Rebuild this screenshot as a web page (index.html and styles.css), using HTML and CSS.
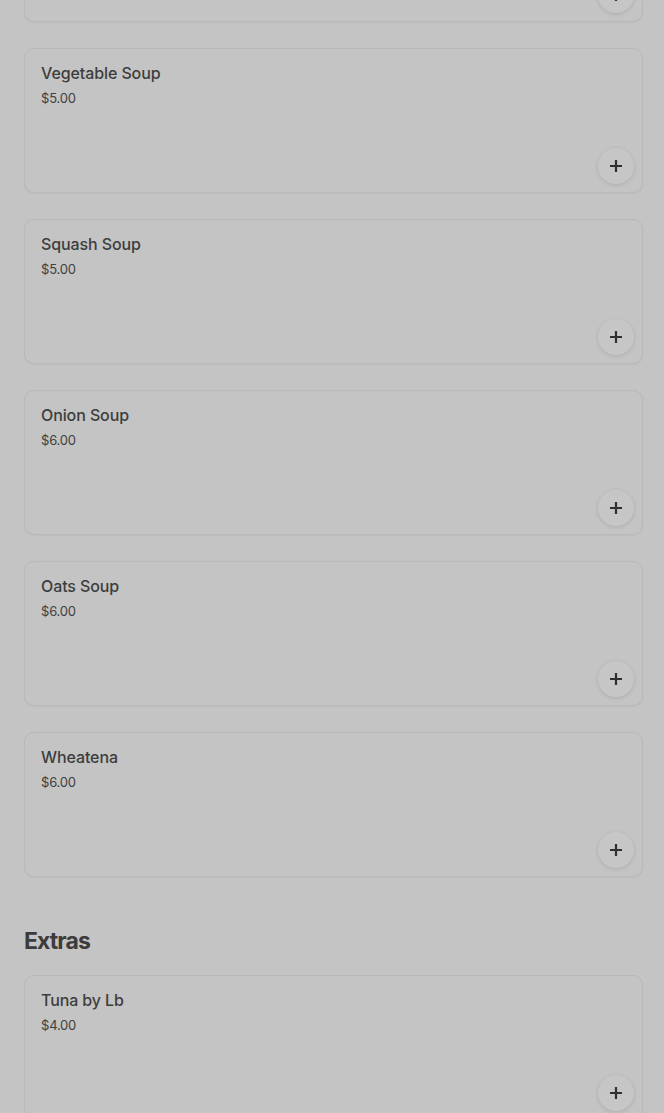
FILE: index.html
```html
<!DOCTYPE html>
<html lang="en">

<head>
    <meta charset="UTF-8">
    <meta name="viewport" content="width=device-width, initial-scale=1.0">
    <title>Menu</title>
    <link rel="stylesheet" href="styles.css">
</head>

<body>

    <div class="menu">
        <section class="category">
            <div class="item">
                <h3>Chicken Soup</h3>
                <p>$5.00</p>
                <button class="add" aria-label="Add">
                    <svg viewBox="0 0 14 14" width="14" height="14"><path d="M7 1v12M1 7h12" stroke="currentColor" stroke-width="2.2" fill="none"/></svg>
                </button>
            </div>
            <div class="item">
                <h3>Vegetable Soup</h3>
                <p>$5.00</p>
                <button class="add" aria-label="Add">
                    <svg viewBox="0 0 14 14" width="14" height="14"><path d="M7 1v12M1 7h12" stroke="currentColor" stroke-width="2.2" fill="none"/></svg>
                </button>
            </div>
            <div class="item">
                <h3>Squash Soup</h3>
                <p>$5.00</p>
                <button class="add" aria-label="Add">
                    <svg viewBox="0 0 14 14" width="14" height="14"><path d="M7 1v12M1 7h12" stroke="currentColor" stroke-width="2.2" fill="none"/></svg>
                </button>
            </div>
            <div class="item">
                <h3>Onion Soup</h3>
                <p>$6.00</p>
                <button class="add" aria-label="Add">
                    <svg viewBox="0 0 14 14" width="14" height="14"><path d="M7 1v12M1 7h12" stroke="currentColor" stroke-width="2.2" fill="none"/></svg>
                </button>
            </div>
            <div class="item">
                <h3>Oats Soup</h3>
                <p>$6.00</p>
                <button class="add" aria-label="Add">
                    <svg viewBox="0 0 14 14" width="14" height="14"><path d="M7 1v12M1 7h12" stroke="currentColor" stroke-width="2.2" fill="none"/></svg>
                </button>
            </div>
            <div class="item">
                <h3>Wheatena</h3>
                <p>$6.00</p>
                <button class="add" aria-label="Add">
                    <svg viewBox="0 0 14 14" width="14" height="14"><path d="M7 1v12M1 7h12" stroke="currentColor" stroke-width="2.2" fill="none"/></svg>
                </button>
            </div>
        </section>

        <section class="category">
            <h2>Extras</h2>
            <div class="item">
                <h3>Tuna by Lb</h3>
                <p>$4.00</p>
                <button class="add" aria-label="Add">
                    <svg viewBox="0 0 14 14" width="14" height="14"><path d="M7 1v12M1 7h12" stroke="currentColor" stroke-width="2.2" fill="none"/></svg>
                </button>
            </div>
        </section>
    </div>

</body>

</html>
```

FILE: styles.css
```css
body {
    font-family: Inter, "Noto Sans", sans-serif;
    background-color: #c4c4c4;
    margin: 0;
    padding: 0;
    overflow: hidden;
}

.menu {
    width: 619px;
    margin: -123px 0 0 24px;
}

.category {
    display: flex;
    flex-direction: column;
    gap: 26px;
}

.category h2 {
    margin: 49px 0 -7px;
    font-size: 23px;
    font-weight: 700;
    line-height: 30px;
    letter-spacing: -0.9px;
    color: #3c3c3c;
}

/* Menu items */
.item {
    box-sizing: border-box;
    height: 145px;
    display: flex;
    flex-direction: column;
    padding: 13px 8px 8px 16px;
    border: 1px solid #b9b9b9;
    border-radius: 10px;
    background-color: #c4c4c4;
    box-shadow: 0 1px 2px rgba(0, 0, 0, 0.04);
}

.item h3 {
    margin: 0;
    font-size: 16px;
    font-weight: 500;
    line-height: 22px;
    letter-spacing: -0.1px;
    color: #3d3d3d;
}

.item p {
    margin: 5px 0 0;
    font-size: 13px;
    line-height: 18px;
    letter-spacing: -0.2px;
    color: #404040;
}

.add {
    margin-top: auto;
    align-self: flex-end;
    width: 36px;
    height: 36px;
    border: none;
    border-radius: 50%;
    padding: 0;
    background-color: #c6c6c6;
    color: #2f2f2f;
    display: flex;
    align-items: center;
    justify-content: center;
    box-shadow: 0 1px 4px rgba(0, 0, 0, 0.12);
    cursor: pointer;
}
```
